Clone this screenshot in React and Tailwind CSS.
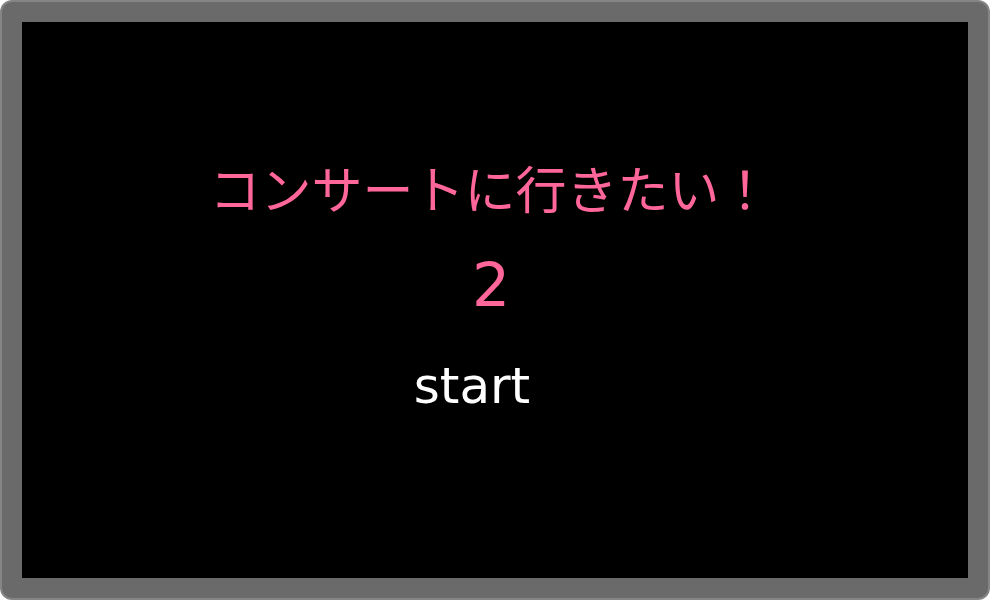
export default function App() {
  return (
    <div className="w-[990px] h-[600px] bg-white">
      <div className="w-full h-full rounded-[12px] bg-[#858585] p-[2px]">
        <div className="w-full h-full rounded-[10px] border-[20px] border-[#6a6a6a] bg-black flex flex-col items-center pt-[115px] font-['DejaVu_Sans','Noto_Sans_CJK_JP',sans-serif]">
          <h1 className="mr-[10px] text-[51px] leading-[100px] font-normal text-[#ff6699] font-['Noto_Sans_CJK_JP','DejaVu_Sans',sans-serif]">
            コンサートに行きたい！
          </h1>
          <div className="mt-[3px] text-[60px] leading-[90px] text-[#ff6699] mr-[8px]">2</div>
          <button className="mt-[6px] text-[50px] leading-[100px] text-white mr-[46px]">start</button>
        </div>
      </div>
    </div>
  );
}
